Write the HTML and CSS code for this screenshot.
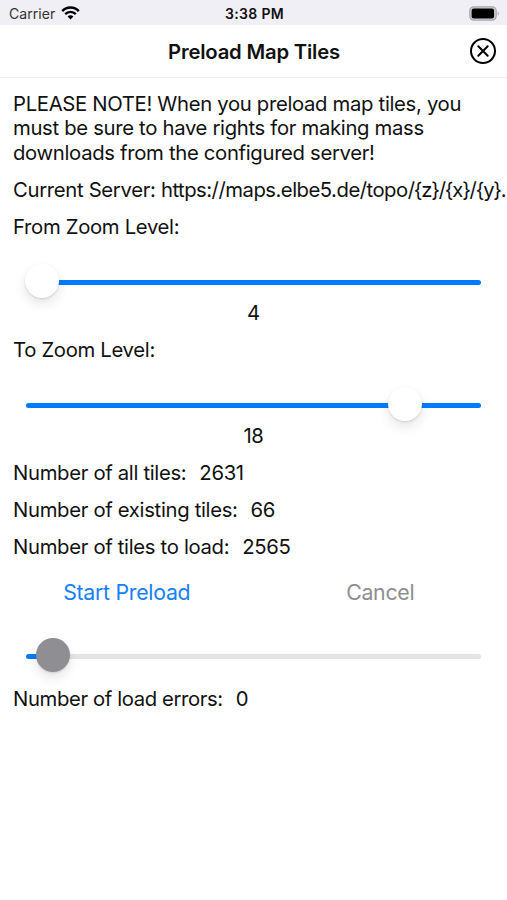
FILE: index.html
```html
<!DOCTYPE html>
<html lang="en">
<head>
<meta charset="utf-8">
<title>Preload Map Tiles</title>
<link rel="stylesheet" href="styles.css">
</head>
<body>
<div class="status">
  <div class="carrier"><span>Carrier</span>
    <svg width="19" height="14" viewBox="0 0 19 14"><path d="M1.2 5.2C5.7.4 13.3.4 17.8 5.2" fill="none" stroke="#000" stroke-width="2.5"/><path d="M4.2 8.2C7.2 5.1 11.8 5.1 14.8 8.2" fill="none" stroke="#000" stroke-width="2.4"/><path d="M6.6 10.5C8.2 8.8 10.8 8.8 12.4 10.5L9.5 13.5Z"/></svg>
  </div>
  <div class="time">3:38 PM</div>
  <svg class="battery" width="31" height="15" viewBox="0 0 31 15"><rect x=".8" y=".8" width="26.4" height="13.4" rx="4" fill="#d0d0d2" stroke="#a9a9ab" stroke-width="1.2"/><rect x="2.6" y="2.6" width="22.5" height="9.8" rx="2.2"/><path d="M28.7 5.2Q31 7.5 28.7 9.8Z" fill="#a9a9ab"/></svg>
</div>
<header class="header">
  <h1>Preload Map Tiles</h1>
  <svg class="close" width="28" height="28" viewBox="0 0 28 28" fill="none" stroke="#000" stroke-width="2" stroke-linecap="round"><circle cx="14" cy="14" r="12"/><path d="M9.3 9.3l9.4 9.4M18.7 9.3l-9.4 9.4"/></svg>
</header>
<main class="content">
  <p class="note">PLEASE NOTE! When you preload map tiles, you<br>must be sure to have rights for making mass<br>downloads from the configured server!</p>
  <div class="row server"><div>Current Server: <span class="host">https://maps.elbe5.de/topo</span><span class="pattern">/{z}/{x}/{y}.</span></div></div>
  <div class="row">From Zoom Level:</div>
  <div class="slider"><div class="track"></div><div class="thumb thumb-from"></div></div>
  <div class="row value">4</div>
  <div class="row">To Zoom Level:</div>
  <div class="slider"><div class="track"></div><div class="thumb thumb-to"></div></div>
  <div class="row value">18</div>
  <div class="row"><span>Number of all tiles:</span><span>2631</span></div>
  <div class="row"><span>Number of existing tiles:</span><span>66</span></div>
  <div class="row"><span>Number of tiles to load:</span><span>2565</span></div>
  <div class="actions"><span class="start">Start Preload</span><span class="cancel">Cancel</span></div>
  <div class="slider progress"><div class="track"></div><div class="thumb thumb-progress"></div></div>
  <div class="row errors"><span>Number of load errors:</span><span>0</span></div>
</main>
</body>
</html>
```
FILE: styles.css
```css
* { box-sizing: border-box; }
body { margin: 0; width: 507px; height: 900px; overflow: hidden; background: #fff; color: #111; font: 20.3px/24.7px Inter, "Liberation Sans", sans-serif; letter-spacing: -0.32px; }
svg { display: block; flex: none; }
.status { height: 25px; background: #f0eff5; display: grid; grid-template-columns: 1fr auto 1fr; align-items: center; padding: 3px 7px 0 9px; font-size: 14px; line-height: 20px; letter-spacing: 0.05px; }
.carrier { display: flex; align-items: center; gap: 6px; color: #333; }
.carrier svg { margin-top: -2px; }
.time { font-weight: 600; font-size: 14px; letter-spacing: 0.35px; }
.battery { justify-self: end; margin-top: -2px; }
.header { height: 53px; border-bottom: 1px solid #ececec; display: grid; grid-template-columns: 1fr auto 1fr; align-items: center; padding: 0 10px; }
.header h1 { grid-column: 2; margin: 2px 0 0 1px; font-size: 20.3px; font-weight: 600; letter-spacing: -0.2px; }
.close { justify-self: end; }
.content { padding-top: 13.5px; }
.note { margin: 0 0 5.4px 13px; white-space: nowrap; }
.row { height: 37px; padding: 2px 0 0 13px; display: flex; align-items: center; gap: 13px; white-space: nowrap; }
.host { letter-spacing: -0.5px; }
.pattern { letter-spacing: -1.2px; }
.value { justify-content: center; padding-left: 0; }
.slider { height: 49px; padding: 0 26px; position: relative; }
.track { position: relative; top: 34.5px; height: 5px; border-radius: 3px; background: #047aff; }
.thumb { position: absolute; top: 18.5px; width: 34px; height: 34px; border-radius: 50%; background: #fff; box-shadow: 0 6px 12px rgba(0,0,0,.1), 0 1px 2px rgba(0,0,0,.12); }
.thumb-from { left: 25px; }
.thumb-to { left: 388px; }
.actions { height: 53px; padding-top: 2px; display: grid; grid-template-columns: 1fr 1fr; align-items: center; justify-items: center; font-size: 21.3px; letter-spacing: -0.28px; }
.start { color: #1680f8; }
.cancel { color: #8e8e91; }
.progress { height: 62px; }
.progress .track { top: 35.5px; background: linear-gradient(90deg, #047aff 26px, #e4e4e4 26px); }
.thumb-progress { left: 36px; top: 20px; background: #8e8e93; }
.errors { letter-spacing: -0.38px; }
```
